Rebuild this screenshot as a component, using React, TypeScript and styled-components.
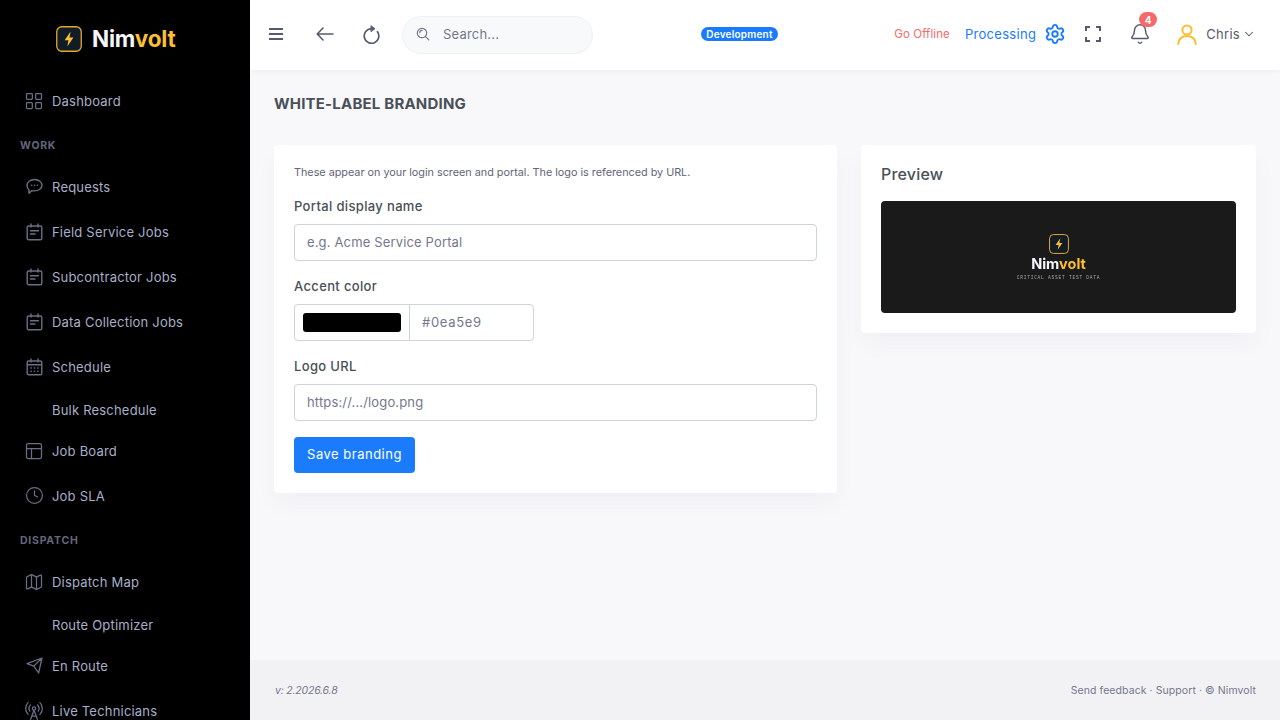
import React from 'react';
import styled, { createGlobalStyle } from 'styled-components';
import { Bell, ChevronDown, Clock, LayoutGrid, Map, PanelsTopLeft, RadioTower, Settings } from 'lucide-react';

const GlobalStyle = createGlobalStyle`
  html, body { margin: 0; padding: 0; height: 100%; }
  body { font-family: Inter, "Open Sans", sans-serif; background: #f8f8fb; overflow: hidden; }
  * { box-sizing: border-box; }
`;

const Shell = styled.div`
  display: flex;
  width: 1280px;
  height: 720px;
  overflow: hidden;
`;

const Sidebar = styled.aside`
  width: 250px;
  flex-shrink: 0;
  height: 720px;
  overflow: hidden;
  background: #000;
  display: flex;
  flex-direction: column;
`;

const Brand = styled.div`
  height: 78px;
  flex-shrink: 0;
  display: flex;
  align-items: center;
  gap: 10px;
  padding-left: 56px;
`;

const BrandName = styled.span<{ $small?: boolean }>`
  font-size: ${p => (p.$small ? '14.5px' : '22.5px')};
  line-height: 1;
  font-weight: 700;
  letter-spacing: ${p => (p.$small ? '0' : '-0.2px')};
  color: #f5f6f9;
  b { color: #fbbf33; font-weight: 700; }
`;

const NavRow = styled.div<{ $bare?: boolean }>`
  height: ${p => (p.$bare ? '39px' : '45px')};
  flex-shrink: 0;
  display: flex;
  align-items: center;
  gap: 8px;
  padding: ${p => (p.$bare ? '2px 0 0 52px' : '0 0 0 24px')};
  color: #a8afc8;
  font-size: 13px;
  letter-spacing: 0.2px;
`;

const NavIcon = styled.span`
  width: 20px;
  height: 20px;
  flex-shrink: 0;
  display: flex;
  align-items: center;
  justify-content: center;
  color: #6a6f86;
`;

const NavLabel = styled.div`
  height: 41px;
  flex-shrink: 0;
  display: flex;
  align-items: center;
  padding: 4px 0 0 20px;
  color: #62677d;
  font-size: 10.5px;
  font-weight: 700;
  letter-spacing: 0.75px;
`;

const Main = styled.div`
  flex: 1;
  min-width: 0;
  display: flex;
  flex-direction: column;
`;

const Topbar = styled.header`
  height: 70px;
  flex-shrink: 0;
  background: #fff;
  box-shadow: 0 1px 6px rgba(18, 38, 63, 0.05);
  display: flex;
  align-items: center;
  padding: 0 24px 2px 19px;
  color: #555b6e;
`;

const ToolIcon = styled.span<{ $before?: number; $after?: number }>`
  display: inline-flex;
  margin-left: ${p => p.$before ?? 0}px;
  margin-right: ${p => p.$after ?? 0}px;
  flex-shrink: 0;
`;

const SearchBox = styled.div`
  width: 191px;
  height: 38px;
  margin-top: 2px;
  flex-shrink: 0;
  display: flex;
  align-items: center;
  gap: 13px;
  padding: 0 0 2px 13px;
  background: #f8f9fa;
  border: 1px solid #eef0f4;
  border-radius: 19px;
  color: #74788d;
  font-size: 13px;
  letter-spacing: 0.2px;
`;

const EnvBadge = styled.span`
  margin-left: 108px;
  width: 77px;
  height: 14px;
  flex-shrink: 0;
  display: flex;
  align-items: center;
  justify-content: center;
  background: #1a7cfb;
  color: #fff;
  border-radius: 7px;
  font-size: 10px;
  font-weight: 600;
  letter-spacing: 0.2px;
`;

const OfflineLink = styled.span`
  margin-left: auto;
  color: #f46a6a;
  font-size: 11.5px;
  letter-spacing: 0.1px;
`;

const ProcessingLink = styled.span`
  margin-left: 15px;
  display: flex;
  align-items: center;
  gap: 8px;
  color: #1a7cfb;
  font-size: 13px;
  letter-spacing: 0.3px;
`;

const BellWrap = styled.span`
  position: relative;
  display: inline-flex;
  margin-left: 28px;
`;

const BellBadge = styled.span`
  position: absolute;
  top: -11px;
  left: 10px;
  width: 18px;
  height: 15px;
  border-radius: 8px;
  background: #f46a6a;
  color: #fff;
  font-size: 10px;
  font-weight: 700;
  display: flex;
  align-items: center;
  justify-content: center;
`;

const UserMenu = styled.div`
  margin-left: 26px;
  display: flex;
  align-items: center;
  color: #555b6e;
  font-size: 13px;
  letter-spacing: 0.3px;
`;

const UserName = styled.span`
  margin: 0 2px 0 9px;
`;

const Content = styled.main`
  flex: 1;
  min-height: 0;
  padding: 24px 24px 0;
`;

const PageTitle = styled.h1`
  margin: 0 0 32px;
  height: 19px;
  line-height: 19px;
  font-size: 15px;
  font-weight: 700;
  letter-spacing: 0.2px;
  color: #495057;
`;

const Columns = styled.div`
  display: grid;
  grid-template-columns: 563px 395px;
  gap: 24px;
  align-items: start;
`;

const Card = styled.section`
  background: #fff;
  border-radius: 4px;
  box-shadow: 0 12px 24px rgba(18, 38, 63, 0.03);
  padding: 20px;
`;

const Hint = styled.p`
  margin: 1px 0 17px;
  height: 14px;
  line-height: 14px;
  font-size: 10.8px;
  color: #606578;
`;

const FieldLabel = styled.label`
  display: block;
  height: 18px;
  line-height: 18px;
  margin-bottom: 9px;
  font-size: 13px;
  font-weight: 500;
  letter-spacing: 0.35px;
  color: #495057;
`;

const Field = styled.div`
  margin-bottom: 16px;
`;

const TextInput = styled.div`
  height: 37px;
  display: flex;
  align-items: center;
  padding: 0 12px 2px;
  border: 1px solid #ced4da;
  border-radius: 4px;
  color: #74788d;
  font-size: 13px;
  letter-spacing: 0.15px;
`;

const ColorGroup = styled.div`
  display: flex;
  width: 240px;
  height: 37px;
  border: 1px solid #ced4da;
  border-radius: 4px;
`;

const SwatchCell = styled.div`
  width: 115px;
  flex-shrink: 0;
  padding: 8px;
  border-right: 1px solid #ced4da;
`;

const Swatch = styled.div`
  height: 19px;
  background: #000;
  border-radius: 3px;
`;

const ColorValue = styled.div`
  flex: 1;
  display: flex;
  align-items: center;
  padding: 0 0 2px 12px;
  color: #74788d;
  font-size: 13px;
  letter-spacing: 0.7px;
`;

const SaveButton = styled.button`
  display: block;
  width: 121px;
  height: 36px;
  padding: 0 0 2px;
  border: 0;
  border-radius: 4px;
  background: #1a7cfb;
  color: #fff;
  font-family: inherit;
  font-size: 13px;
  letter-spacing: 0.5px;
`;

const PreviewTitle = styled.h2`
  margin: 0 0 15px;
  height: 21px;
  line-height: 18px;
  font-size: 16px;
  font-weight: 500;
  letter-spacing: 0.2px;
  color: #495057;
`;

const PreviewPane = styled.div`
  height: 112px;
  background: #1a1a1a;
  border-radius: 4px;
  display: flex;
  flex-direction: column;
  align-items: center;
  justify-content: center;
  padding-top: 1px;
`;

const PreviewArt = styled.div`
  display: flex;
  flex-direction: column;
  align-items: center;
  filter: blur(0.3px);
`;

const PreviewName = styled.div`
  margin-top: 2px;
  height: 17px;
  display: flex;
  align-items: center;
`;

const Tagline = styled.div`
  margin-top: 2px;
  font-family: "Liberation Mono", monospace;
  font-size: 4.5px;
  line-height: 6px;
  letter-spacing: 0.78px;
  color: #a8a8a8;
  white-space: nowrap;
`;

const Footer = styled.footer`
  height: 60px;
  flex-shrink: 0;
  background: #f2f2f5;
  display: flex;
  align-items: center;
  justify-content: space-between;
  padding: 0 24px 0 25px;
  color: #74788d;
  font-size: 10.5px;
  letter-spacing: 0.08px;
  em { font-style: italic; letter-spacing: -0.2px; }
`;

const sw = { fill: 'none', stroke: 'currentColor', strokeLinecap: 'round' as const, strokeLinejoin: 'round' as const };

const LogoMark = ({ size }: { size: number }) => (
  <svg width={size} height={size} viewBox="0 0 26 26">
    <rect x="0.75" y="0.75" width="24.5" height="24.5" rx="5" fill="#121c26" stroke="#e0a92f" strokeWidth="1.3" />
    <path d="M14.6 5.6 8.6 14.3h3.9l-1.2 6.2 6.1-8.9h-3.9z" fill="#fbbf33" />
  </svg>
);

const ChatBubble = () => (
  <svg width="17" height="17" viewBox="0 0 17 17" strokeWidth="1.4" {...sw}>
    <path d="M8.5 1.5c4.2 0 7.5 2.6 7.5 5.7s-3.3 5.7-7.5 5.7c-.9 0-1.7-.1-2.5-.3L3 15.3v-3.4C1.8 10.8 1 9.1 1 7.2 1 4.1 4.3 1.5 8.5 1.5z" />
    <path d="M5.6 7.2h.1M8.5 7.2h.1M11.4 7.2h.1" strokeWidth="1.6" />
  </svg>
);

const NoteCalendar = () => (
  <svg width="17" height="18" viewBox="0 0 17 18" strokeWidth="1.4" {...sw}>
    <rect x="1.2" y="3" width="14.6" height="13.8" rx="1.6" />
    <path d="M5 1v3M12 1v3M4.5 7.8h8M4.5 11h4.5" />
  </svg>
);

const GridCalendar = () => (
  <svg width="17" height="18" viewBox="0 0 17 18" strokeWidth="1.4" {...sw}>
    <rect x="1.2" y="3" width="14.6" height="13.8" rx="1.6" />
    <path d="M5 1v3M12 1v3M1.5 6.8h14" />
    <path d="M5 10h.2M8.4 10h.2M11.8 10h.2M5 13.2h.2M8.4 13.2h.2M11.8 13.2h.2" strokeWidth="1.6" />
  </svg>
);

const PaperPlane = () => (
  <svg width="17" height="17" viewBox="0 0 17 17" strokeWidth="1.3" {...sw}>
    <path d="M16 1 1 6.6l6.8 2.5L12.6 16zM16 1 7.8 9.1" />
  </svg>
);

const MenuIcon = () => (
  <svg width="14" height="12" viewBox="0 0 14 12" fill="currentColor">
    <rect y="0" width="14" height="2" />
    <rect y="5" width="14" height="2" />
    <rect y="10" width="14" height="2" />
  </svg>
);

const BackIcon = () => (
  <svg width="18" height="14" viewBox="0 0 18 14" strokeWidth="1.6" {...sw}>
    <path d="M17 7H1.2M7 1 1.2 7 7 13" />
  </svg>
);

const ReloadIcon = () => (
  <svg width="17" height="19" viewBox="0 0 17 19" strokeWidth="1.7" {...sw}>
    <path d="M14.5 6.8A7.3 7.3 0 1 1 8.2 3.7" />
    <path d="M8.2 0.8 12 3.8 8.2 6.6z" fill="currentColor" strokeWidth="0.8" />
  </svg>
);

const SearchIcon = () => (
  <svg width="14" height="14" viewBox="0 0 14 14" strokeWidth="1.2" {...sw}>
    <circle cx="6" cy="6" r="4.7" />
    <path d="M9.6 9.6 12.8 12.8M3.7 5.6A2.4 2.4 0 0 1 6 3.4" />
  </svg>
);

const FullscreenIcon = () => (
  <svg width="16" height="16" viewBox="0 0 16 16" fill="none" stroke="currentColor" strokeWidth="2">
    <path d="M1 5V1h4M11 1h4v4M15 11v4h-4M5 15H1v-4" />
  </svg>
);

const UserIcon = () => (
  <svg width="20" height="21" viewBox="0 0 20 21" strokeWidth="2" stroke="#fbbf33" fill="none" strokeLinecap="round">
    <circle cx="10" cy="6" r="4.6" />
    <path d="M1.2 20c0-5 3.9-8 8.8-8s8.8 3 8.8 8" />
  </svg>
);

type NavEntry =
  | { section: string }
  | { title: string; icon?: React.ReactNode };

const lucide = { size: 20, strokeWidth: 1.5 };

const navEntries: NavEntry[] = [
  { title: 'Dashboard', icon: <LayoutGrid {...lucide} /> },
  { section: 'WORK' },
  { title: 'Requests', icon: <ChatBubble /> },
  { title: 'Field Service Jobs', icon: <NoteCalendar /> },
  { title: 'Subcontractor Jobs', icon: <NoteCalendar /> },
  { title: 'Data Collection Jobs', icon: <NoteCalendar /> },
  { title: 'Schedule', icon: <GridCalendar /> },
  { title: 'Bulk Reschedule' },
  { title: 'Job Board', icon: <PanelsTopLeft {...lucide} /> },
  { title: 'Job SLA', icon: <Clock size={19} strokeWidth={1.5} /> },
  { section: 'DISPATCH' },
  { title: 'Dispatch Map', icon: <Map {...lucide} /> },
  { title: 'Route Optimizer' },
  { title: 'En Route', icon: <PaperPlane /> },
  { title: 'Live Technicians', icon: <RadioTower {...lucide} /> },
];

export default function App() {
  return (
    <Shell>
      <GlobalStyle />
      <Sidebar>
        <Brand>
          <LogoMark size={26} />
          <BrandName>Nim<b>volt</b></BrandName>
        </Brand>
        {navEntries.map(entry =>
          'section' in entry ? (
            <NavLabel key={entry.section}>{entry.section}</NavLabel>
          ) : (
            <NavRow key={entry.title} $bare={!entry.icon}>
              {entry.icon && <NavIcon>{entry.icon}</NavIcon>}
              <span>{entry.title}</span>
            </NavRow>
          ),
        )}
      </Sidebar>
      <Main>
        <Topbar>
          <ToolIcon $after={33}><MenuIcon /></ToolIcon>
          <ToolIcon $after={29}><BackIcon /></ToolIcon>
          <ToolIcon $after={22}><ReloadIcon /></ToolIcon>
          <SearchBox>
            <SearchIcon />
            <span>Search...</span>
          </SearchBox>
          <EnvBadge>Development</EnvBadge>
          <OfflineLink>Go Offline</OfflineLink>
          <ProcessingLink>
            Processing
            <Settings size={22} strokeWidth={2} />
          </ProcessingLink>
          <ToolIcon $before={19}><FullscreenIcon /></ToolIcon>
          <BellWrap>
            <Bell size={22} strokeWidth={1.6} />
            <BellBadge>4</BellBadge>
          </BellWrap>
          <UserMenu>
            <UserIcon />
            <UserName>Chris</UserName>
            <ChevronDown size={14} strokeWidth={1.8} />
          </UserMenu>
        </Topbar>
        <Content>
          <PageTitle>WHITE-LABEL BRANDING</PageTitle>
          <Columns>
            <Card>
              <Hint>These appear on your login screen and portal. The logo is referenced by URL.</Hint>
              <Field>
                <FieldLabel>Portal display name</FieldLabel>
                <TextInput>e.g. Acme Service Portal</TextInput>
              </Field>
              <Field>
                <FieldLabel>Accent color</FieldLabel>
                <ColorGroup>
                  <SwatchCell><Swatch /></SwatchCell>
                  <ColorValue>#0ea5e9</ColorValue>
                </ColorGroup>
              </Field>
              <Field>
                <FieldLabel>Logo URL</FieldLabel>
                <TextInput>https://.../logo.png</TextInput>
              </Field>
              <SaveButton>Save branding</SaveButton>
            </Card>
            <Card>
              <PreviewTitle>Preview</PreviewTitle>
              <PreviewPane>
                <PreviewArt>
                  <LogoMark size={20} />
                  <PreviewName>
                    <BrandName $small>Nim<b>volt</b></BrandName>
                  </PreviewName>
                  <Tagline>CRITICAL ASSET TEST DATA</Tagline>
                </PreviewArt>
              </PreviewPane>
            </Card>
          </Columns>
        </Content>
        <Footer>
          <em>v: 2.2026.6.8</em>
          <span>Send feedback · Support · © Nimvolt</span>
        </Footer>
      </Main>
    </Shell>
  );
}
